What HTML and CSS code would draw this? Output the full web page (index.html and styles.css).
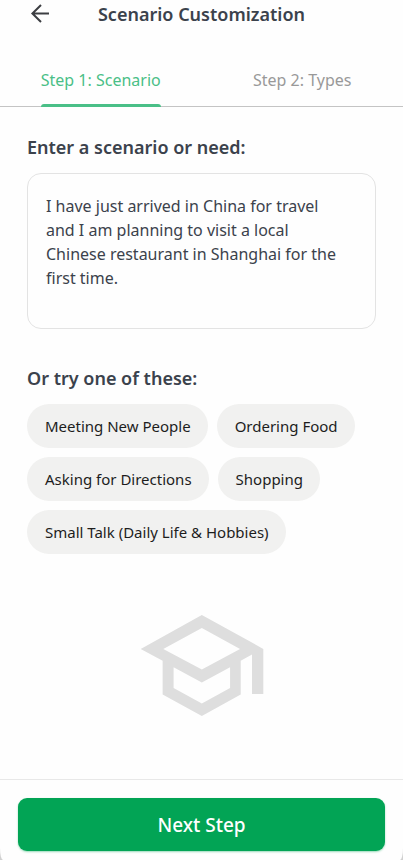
FILE: index.html
```html
<!DOCTYPE html>
<html lang="en">
<head>
<meta charset="utf-8">
<meta name="viewport" content="width=device-width, initial-scale=1">
<title>Scenario Customization</title>
<link rel="stylesheet" href="styles.css">
</head>
<body>
<div class="screen">
  <header class="topbar">
    <button class="back" type="button" aria-label="Back">
      <svg viewBox="0 0 20 20" aria-hidden="true"><path d="M19 9.5H2.5M11 1L2.4 9.5L11 18"/></svg>
    </button>
    <h1 class="title">Scenario Customization</h1>
  </header>
  <nav class="tabs">
    <a class="tab tab-active" href="#scenario" aria-current="step">Step 1: Scenario</a>
    <a class="tab" href="#types">Step 2: Types</a>
  </nav>
  <main class="content">
    <label class="heading" for="need">Enter a scenario or need:</label>
    <textarea class="need" id="need">I have just arrived in China for travel and I am planning to visit a local Chinese restaurant in Shanghai for the first time.</textarea>
    <h2 class="heading">Or try one of these:</h2>
    <div class="chips">
      <button class="chip" type="button">Meeting New People</button>
      <button class="chip" type="button">Ordering Food</button>
      <button class="chip" type="button">Asking for Directions</button>
      <button class="chip" type="button">Shopping</button>
      <button class="chip" type="button">Small Talk (Daily Life &amp; Hobbies)</button>
    </div>
    <svg class="cap" viewBox="61 44 369 304" aria-hidden="true">
      <path fill-rule="evenodd" d="M61 146L245 44L430 146V282H396V163L362 182V283L245 348L127 283V182ZM129 146L245 208L360 146L245 83ZM160 201V264L245 310L330 264V201L245 247Z"/>
    </svg>
  </main>
  <footer class="footer">
    <button class="next" type="button">Next Step</button>
  </footer>
</div>
</body>
</html>
```
FILE: styles.css
```css
* {
  box-sizing: border-box;
}

body {
  margin: 0;
  background: #d0d0d0;
  color: #3b424c;
  font-family: "Noto Sans", sans-serif;
  font-size: 16px;
  line-height: 24px;
}

button,
textarea {
  font: inherit;
}

.screen {
  display: flex;
  flex-direction: column;
  min-height: 100vh;
  background: #fefefe;
  border-radius: 0 0 3px 3px / 0 0 12px 12px;
}

.topbar {
  display: grid;
  grid-template-columns: 40px 1fr 40px;
  align-items: center;
  height: 28px;
  padding: 0 20px;
}

.back {
  display: flex;
  justify-content: center;
  padding: 0;
  border: 0;
  background: none;
}

.back svg {
  width: 20px;
  height: 20px;
  fill: none;
  stroke: #3c3e42;
  stroke-width: 2;
}

.title {
  margin: 0;
  font-size: 18px;
  font-weight: 600;
  text-align: center;
}

.tabs {
  display: flex;
  margin-top: 40px;
  border-bottom: 1px solid #c4c4c4;
}

.tab {
  display: flex;
  flex: 1;
  flex-direction: column;
  align-items: center;
  height: 38px;
  color: #999;
  text-decoration: none;
}

.tab-active {
  color: #4abf87;
}

.tab-active::after {
  content: "";
  flex-shrink: 0;
  width: 120px;
  height: 3px;
  margin-top: 12px;
  border-radius: 3px 3px 0 0;
  background: #4abf87;
}

.content {
  display: flex;
  flex: 1;
  flex-direction: column;
  padding: 28px 27px 0;
}

.heading {
  margin: 0;
  font-size: 18px;
  font-weight: 600;
}

.need {
  width: 100%;
  height: 156px;
  margin: 14px 0 37px;
  padding: 20px 28px 20px 18px;
  border: 1px solid #e3e3e3;
  border-radius: 14px;
  background: transparent;
  color: #3b424c;
  resize: none;
}

.chips {
  display: flex;
  flex-wrap: wrap;
  gap: 9px;
  margin-top: 14px;
}

.chip {
  height: 44px;
  padding: 0 17px 0 18px;
  border: 0;
  border-radius: 22px;
  background: #f1f1f0;
  color: #1d1d1d;
  font-size: 15px;
}

.cap {
  width: 124px;
  height: 101px;
  margin: 61px auto;
  fill: #dedede;
}

.footer {
  padding: 18px 18px 9px;
  border-top: 1px solid #e8e8e8;
}

.next {
  width: 100%;
  height: 53px;
  border: 0;
  border-radius: 9px;
  background: #02a455;
  box-shadow: 0 1px 2px #02a45566;
  color: #fff;
  font-size: 19px;
  font-weight: 500;
}
```
